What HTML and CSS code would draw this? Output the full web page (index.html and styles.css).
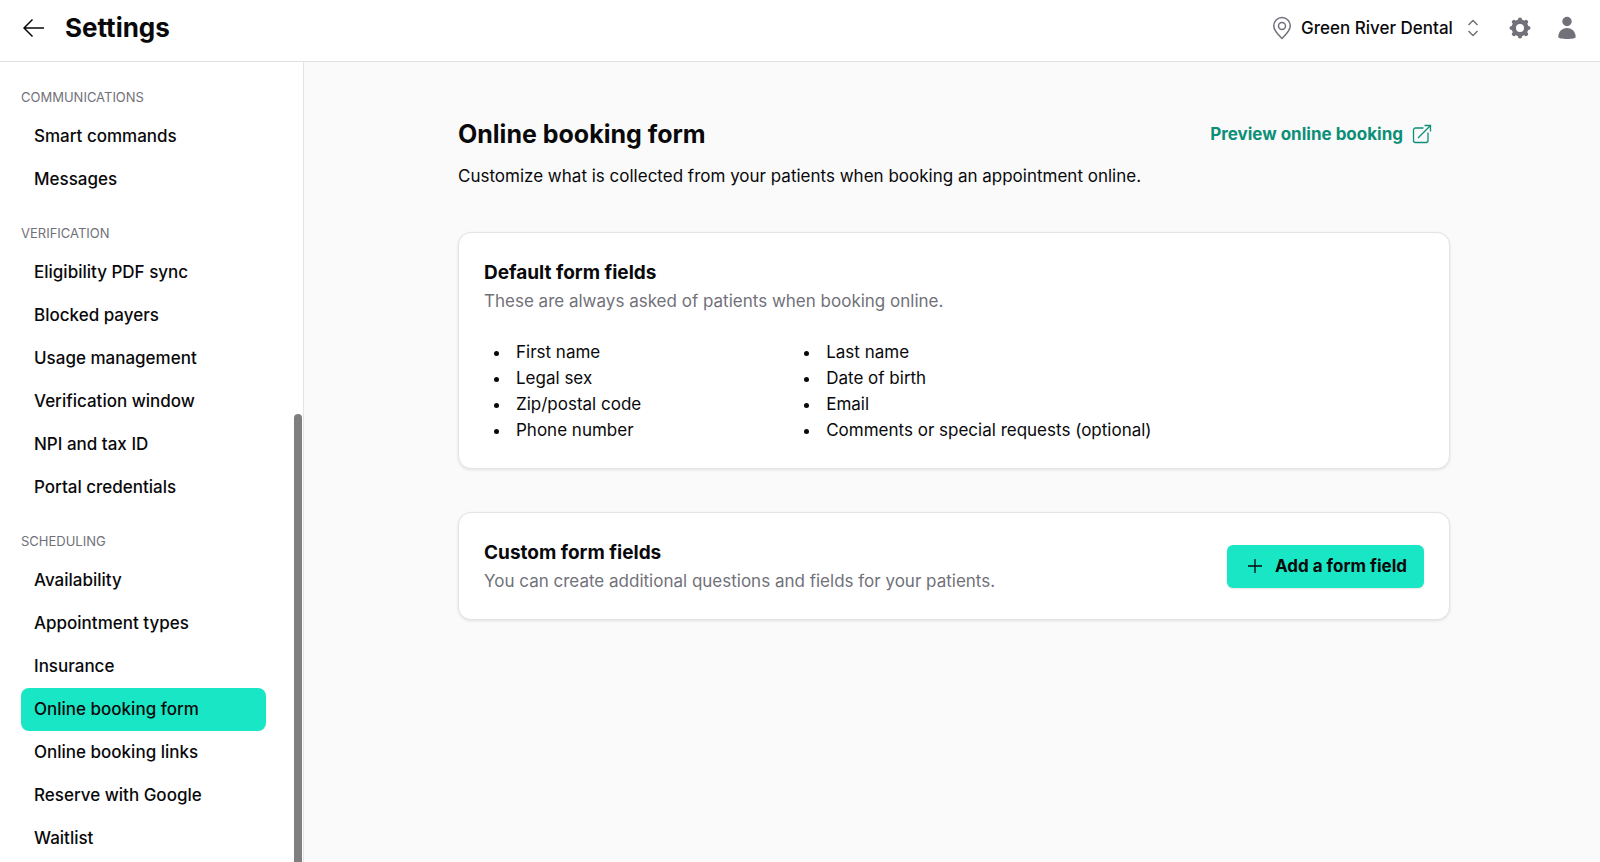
FILE: index.html
```html
<!DOCTYPE html>
<html lang="en">
<head>
  <meta charset="UTF-8">
  <meta name="viewport" content="width=device-width, initial-scale=1">
  <title>Settings</title>
  <link rel="stylesheet" href="styles.css">
</head>
<body>
  <header class="topbar">
    <a class="back" href="#" aria-label="Back">
      <svg width="22" height="20" viewBox="0 0 22 20"><path d="M21 10H1.5M9.5 1.500 1 10l8.500 8.500"/></svg>
    </a>
    <h1>Settings</h1>
    <div class="topbar-actions">
      <label class="location" for="location">
        <svg class="pin" width="20" height="24" viewBox="0 0 20 24"><path d="M10 22.500c4-3.800 8.300-8 8.300-12.700a8.300 8.300 0 0 0-16.600 0C1.700 14.500 6 18.700 10 22.500z"/><circle cx="10" cy="10" r="3.500"/></svg>
        <select id="location" aria-label="Location">
          <option>Green River Dental</option>
        </select>
        <svg class="updown" width="12" height="18" viewBox="0 0 12 18"><path d="M1.500 6 6 1.500 10.500 6M1.500 12 6 16.500l4.500-4.500"/></svg>
      </label>
      <button type="button" class="icon-button" aria-label="Settings">
        <svg width="22" height="22" viewBox="-11 -11 22 22">
          <circle r="6.200" fill="none" stroke="currentColor" stroke-width="4.400"/>
          <path stroke="currentColor" stroke-width="4.200" stroke-linecap="round" d="M0-8.400V-8M0 8v.4M-8.400 0H-8M8 0h.4M-6-6l.2.2M5.800 5.800 6 6M6-6l-.2.2M-5.800 5.800-6 6"/>
        </svg>
      </button>
      <button type="button" class="icon-button" aria-label="Account">
        <svg width="20" height="24" viewBox="0 0 20 24"><circle cx="10" cy="5.500" r="4.700"/><path d="M10 12c5 0 8.700 3.800 8.700 9 0 1.300-3.700 2-8.700 2s-8.700-.7-8.700-2c0-5.200 3.700-9 8.700-9z"/></svg>
      </button>
    </div>
  </header>

  <div class="layout">
    <aside class="sidebar">
      <nav>
        <!-- Communications -->
        <h2>Communications</h2>
        <ul>
          <li><a href="#">Smart commands</a></li>
          <li><a href="#">Messages</a></li>
        </ul>

        <!-- Verification -->
        <h2>Verification</h2>
        <ul>
          <li><a href="#">Eligibility PDF sync</a></li>
          <li><a href="#">Blocked payers</a></li>
          <li><a href="#">Usage management</a></li>
          <li><a href="#">Verification window</a></li>
          <li><a href="#">NPI and tax ID</a></li>
          <li><a href="#">Portal credentials</a></li>
        </ul>

        <!-- Scheduling -->
        <h2>Scheduling</h2>
        <ul>
          <li><a href="#">Availability</a></li>
          <li><a href="#">Appointment types</a></li>
          <li><a href="#">Insurance</a></li>
          <li><a class="active" href="#" aria-current="page">Online booking form</a></li>
          <li><a href="#">Online booking links</a></li>
          <li><a href="#">Reserve with Google</a></li>
          <li><a href="#">Waitlist</a></li>
        </ul>
      </nav>
      <div class="scroll-thumb"></div>
    </aside>

    <main class="content">
      <div class="page">
        <div class="page-header">
          <h2>Online booking form</h2>
          <a class="preview" href="#">
            Preview online booking
            <svg width="20" height="20" viewBox="0 0 20 20"><path d="M11.500 4H3.500A2 2 0 0 0 1.500 6v10.500a2 2 0 0 0 2 2H14a2 2 0 0 0 2-2V8.500M12.500 1.500H18.500V7.500M18.500 1.500 6 14"/></svg>
          </a>
        </div>
        <p class="intro">Customize what is collected from your patients when booking an appointment online.</p>

        <section class="card">
          <h3>Default form fields</h3>
          <p>These are always asked of patients when booking online.</p>
          <div class="fields">
            <ul>
              <li>First name</li>
              <li>Legal sex</li>
              <li>Zip/postal code</li>
              <li>Phone number</li>
            </ul>
            <ul>
              <li>Last name</li>
              <li>Date of birth</li>
              <li>Email</li>
              <li>Comments or special requests (optional)</li>
            </ul>
          </div>
        </section>

        <section class="card card-row">
          <div>
            <h3>Custom form fields</h3>
            <p>You can create additional questions and fields for your patients.</p>
          </div>
          <button type="button" class="add-button">
            <svg width="16" height="16" viewBox="0 0 16 16"><path d="M8 1v14M1 8h14"/></svg>
            Add a form field
          </button>
        </section>
      </div>
    </main>
  </div>
</body>
</html>
```
FILE: styles.css
```css
* {
  box-sizing: border-box;
}
body {
  margin: 0;
  min-height: 100vh;
  display: flex;
  flex-direction: column;
  font-family: Inter, sans-serif;
  font-size: 17px;
  line-height: 26px;
  color: #09090b;
  background-color: #fafafa;
}
h1, h2, h3, p, ul {
  margin: 0;
}
a {
  color: inherit;
  text-decoration: none;
}
button, select {
  font: inherit;
  color: inherit;
  border: none;
  cursor: pointer;
}
svg {
  display: block;
  flex: none;
}

/* Top bar */
.topbar {
  display: flex;
  align-items: center;
  padding: 9px 23px 14px 23px;
  background-color: #fff;
  border-bottom: 1px solid #e1e1e4;
}
.topbar h1 {
  margin-left: 20px;
  font-size: 26px;
  line-height: 38px;
  font-weight: 700;
}
.back svg {
  fill: none;
  stroke: #09090b;
  stroke-width: 1.5;
}
.topbar-actions {
  display: flex;
  align-items: center;
  gap: 26px;
  margin-left: auto;
  color: #71717a;
}
.location {
  display: flex;
  align-items: center;
  margin-right: 4px;
}
.location select {
  margin: 0 14px 0 9px;
  padding: 0;
  appearance: none;
  background: none;
  color: #09090b;
  font-weight: 500;
}
.pin, .updown {
  fill: none;
  stroke: #71717a;
  stroke-width: 1.5;
}
.icon-button {
  padding: 0;
  background: none;
}
.icon-button svg {
  fill: currentColor;
}

/* Sidebar */
.layout {
  display: flex;
  flex: 1;
}
.sidebar {
  position: relative;
  flex: none;
  width: 304px;
  padding: 24px 37px 0 21px;
  background-color: #fff;
  border-right: 1px solid #e4e4e7;
}
.sidebar h2 {
  padding-bottom: 7px;
  font-size: 13px;
  line-height: 22px;
  font-weight: 400;
  text-transform: uppercase;
  color: #71717a;
}
.sidebar ul {
  padding: 0;
  list-style: none;
}
.sidebar ul + h2 {
  margin-top: 21px;
}
.sidebar li a {
  display: block;
  padding: 0 13px;
  line-height: 43px;
  font-weight: 500;
  border-radius: 8px;
}
.sidebar a.active {
  background-color: #19e6c4;
}
.scroll-thumb {
  position: absolute;
  top: 44%;
  right: 1px;
  bottom: 0;
  width: 8px;
  background-color: #7f7f7f;
  border-radius: 4px 4px 0 0;
}

/* Page */
.content {
  flex: 1;
  padding: 55px 12px 40px 16px;
}
.page {
  max-width: 992px;
  margin: 0 auto;
}
.page-header {
  display: flex;
  align-items: center;
  justify-content: space-between;
  padding-right: 18px;
}
.page-header h2 {
  font-size: 25px;
  line-height: 34px;
  font-weight: 700;
}
.preview {
  display: flex;
  align-items: center;
  gap: 9px;
  font-weight: 700;
  color: #0c8f77;
}
.preview svg {
  fill: none;
  stroke: #0c8f77;
  stroke-width: 1.3;
}
.intro {
  margin-top: 12px;
}
.card {
  margin-top: 43px;
  padding: 25px;
  background-color: #fff;
  border: 1px solid #e4e4e7;
  border-radius: 13px;
  box-shadow: 0 1px 3px rgba(0, 0, 0, 0.1);
}
.card h3 {
  font-size: 19px;
  line-height: 30px;
  font-weight: 700;
}
.card p {
  color: #71717a;
}
.fields {
  display: grid;
  grid-template-columns: 33% 1fr;
  margin-top: 25px;
}
.fields ul {
  padding-left: 27px;
}
.fields li {
  padding-left: 5px;
}
.card-row {
  display: flex;
  align-items: center;
  justify-content: space-between;
}
.add-button {
  display: flex;
  align-items: center;
  gap: 12px;
  padding: 8px 17px 9px 20px;
  font-weight: 700;
  background-color: #19e6c4;
  border-radius: 6px;
  box-shadow: 0 1px 2px rgba(0, 0, 0, 0.1);
}
.add-button svg {
  stroke: #09090b;
  stroke-width: 1.3;
}
```
